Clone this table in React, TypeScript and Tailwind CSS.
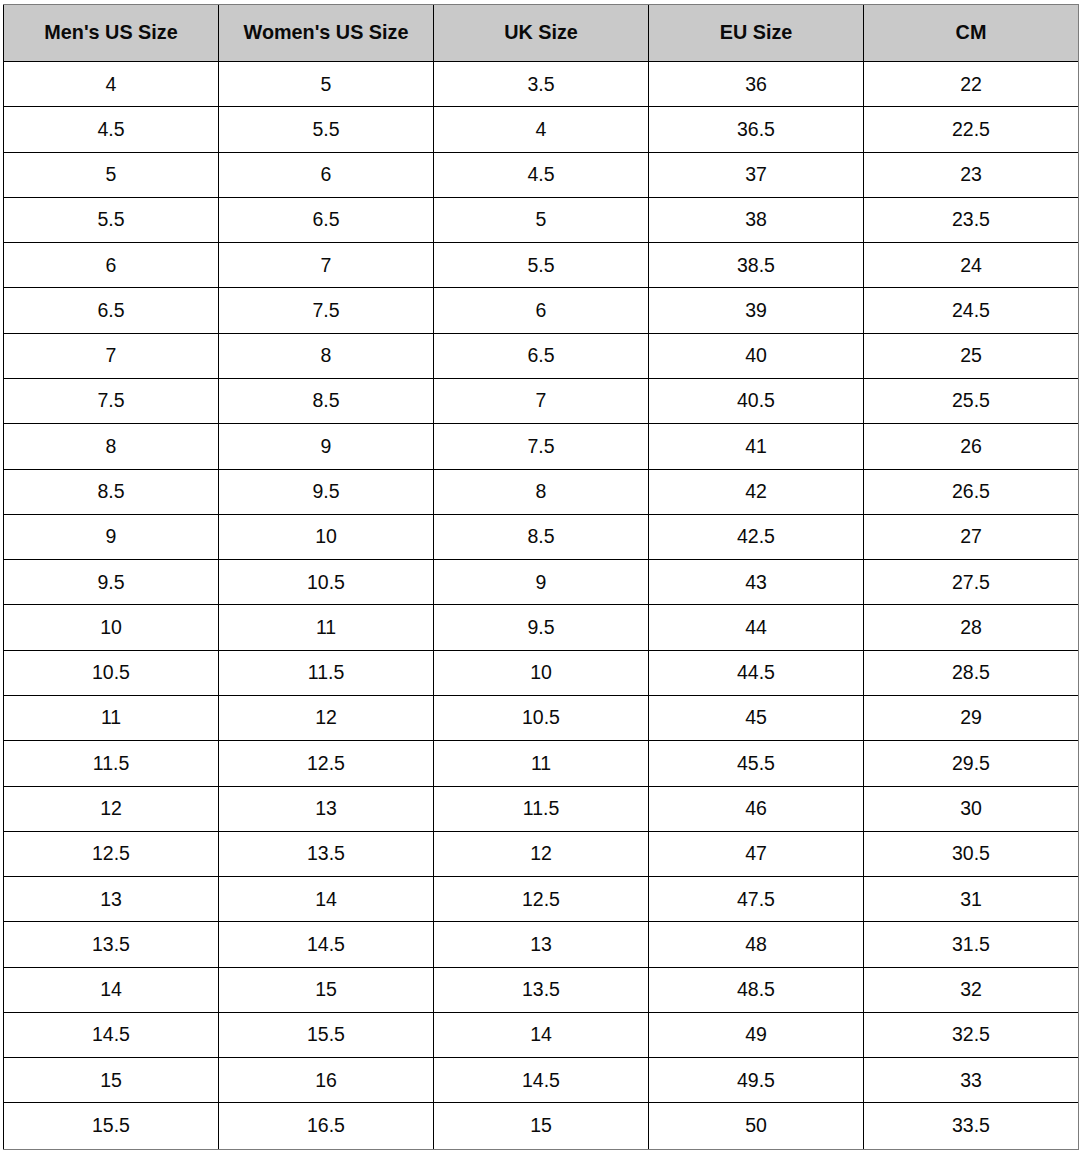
import React from "react";

const headers = ["Men's US Size", "Women's US Size", "UK Size", "EU Size", "CM"];

const rows: string[][] = [
  ["4", "5", "3.5", "36", "22"],
  ["4.5", "5.5", "4", "36.5", "22.5"],
  ["5", "6", "4.5", "37", "23"],
  ["5.5", "6.5", "5", "38", "23.5"],
  ["6", "7", "5.5", "38.5", "24"],
  ["6.5", "7.5", "6", "39", "24.5"],
  ["7", "8", "6.5", "40", "25"],
  ["7.5", "8.5", "7", "40.5", "25.5"],
  ["8", "9", "7.5", "41", "26"],
  ["8.5", "9.5", "8", "42", "26.5"],
  ["9", "10", "8.5", "42.5", "27"],
  ["9.5", "10.5", "9", "43", "27.5"],
  ["10", "11", "9.5", "44", "28"],
  ["10.5", "11.5", "10", "44.5", "28.5"],
  ["11", "12", "10.5", "45", "29"],
  ["11.5", "12.5", "11", "45.5", "29.5"],
  ["12", "13", "11.5", "46", "30"],
  ["12.5", "13.5", "12", "47", "30.5"],
  ["13", "14", "12.5", "47.5", "31"],
  ["13.5", "14.5", "13", "48", "31.5"],
  ["14", "15", "13.5", "48.5", "32"],
  ["14.5", "15.5", "14", "49", "32.5"],
  ["15", "16", "14.5", "49.5", "33"],
  ["15.5", "16.5", "15", "50", "33.5"],
];

export default function App() {
  return (
    <div className="bg-white w-[1082px] h-[1152px] pt-[4px] pl-[3px]" style={{ fontFamily: '"Liberation Sans", Arial, sans-serif' }}>
      <div className="w-[1076px] border-t border-r border-b border-[#7c7c7c] text-[#0a0a0a]">
        <div className="grid grid-cols-5 h-[57px] bg-[#c9c9c9] border-b border-black">
          {headers.map((h) => (
            <div key={h} className="border-l border-black flex items-center justify-center font-bold text-[19.8px]">
              {h}
            </div>
          ))}
        </div>
        {rows.map((r, i) => (
          <div
            key={i}
            className={
              "grid grid-cols-5 h-[45.29px] " + (i < rows.length - 1 ? "border-b border-black" : "")
            }
          >
            {r.map((c, j) => (
              <div key={j} className="border-l border-black flex items-center justify-center text-[19.5px]">
                {c}
              </div>
            ))}
          </div>
        ))}
      </div>
    </div>
  );
}
